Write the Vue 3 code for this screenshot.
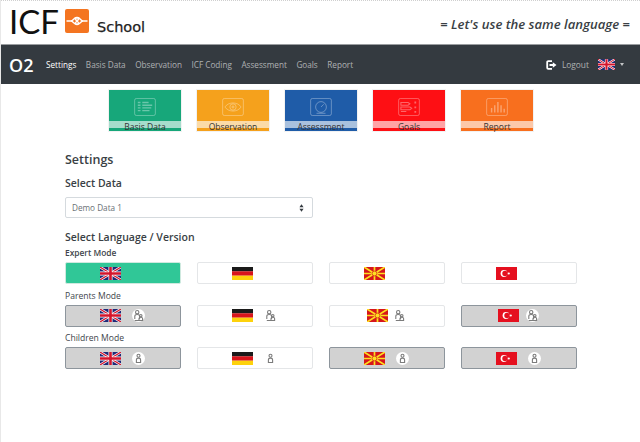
<script setup>
const navItems = [
  { label: 'Settings', active: true },
  { label: 'Basis Data' },
  { label: 'Observation' },
  { label: 'ICF Coding' },
  { label: 'Assessment' },
  { label: 'Goals' },
  { label: 'Report' }
]
const tiles = [
  { label: 'Basis Data', cls: 'green', icon: 'list' },
  { label: 'Observation', cls: 'amber', icon: 'eye' },
  { label: 'Assessment', cls: 'blue', icon: 'gauge' },
  { label: 'Goals', cls: 'red', icon: 'goals' },
  { label: 'Report', cls: 'orange', icon: 'bars' }
]
const modes = [
  {
    title: 'Expert Mode',
    icon: '',
    buttons: [
      { flag: 'uk', state: 'on', gap: 11 },
      { flag: 'de', state: 'off', gap: 11 },
      { flag: 'mk', state: 'off', gap: 11 },
      { flag: 'tr', state: 'off', gap: 11 }
    ]
  },
  {
    title: 'Parents Mode',
    icon: 'parents',
    buttons: [
      { flag: 'uk', state: 'grey', gap: 11 },
      { flag: 'de', state: 'off', gap: 11 },
      { flag: 'mk', state: 'off', gap: 5 },
      { flag: 'tr', state: 'grey', gap: 7 }
    ]
  },
  {
    title: 'Children Mode',
    icon: 'child',
    buttons: [
      { flag: 'uk', state: 'grey', gap: 11 },
      { flag: 'de', state: 'off', gap: 11 },
      { flag: 'mk', state: 'grey', gap: 11 },
      { flag: 'tr', state: 'grey', gap: 11 }
    ]
  }
]
</script>

<template>
  <div class="page">
    <header class="brand">
      <div class="brand-left">
        <span class="icf">ICF</span>
        <svg class="logo" viewBox="0 0 24 24" width="24" height="24">
          <rect width="24" height="24" rx="2" fill="#f47521" />
          <path d="M1.500 12H6c2 0 3-3.400 5.500-3.400S14 10.500 12 12s-2 3.400.5 3.400S16 12 18 12h4.500" fill="none" stroke="#fff" stroke-width="1.500" />
          <path d="M6 12c2 0 3 3.400 5.500 3.400S14 13.500 12 12s-2-3.400.5-3.400S16 12 18 12" fill="none" stroke="#fff" stroke-width="1.500" />
        </svg>
        <span class="school">School</span>
      </div>
      <div class="tagline"><span>=</span> <em>Let's use the same language</em> <span>=</span></div>
    </header>

    <nav class="navbar">
      <span class="project">O2</span>
      <ul class="nav-list">
        <li v-for="n in navItems" :key="n.label" :class="{ active: n.active }">{{ n.label }}</li>
      </ul>
      <div class="nav-right">
        <svg class="logout-icon" viewBox="0 0 11 10" width="11" height="10">
          <path d="M6 1.200H2.200a1 1 0 0 0-1 1v5.600a1 1 0 0 0 1 1H6" fill="none" stroke="#fff" stroke-width="1.800" />
          <path d="M3.500 4h3.300V2.200L10.500 5 6.800 7.800V6H3.500z" fill="#fff" />
        </svg>
        <span class="logout">Logout</span>
        <svg class="nav-flag" viewBox="0 0 21 13" width="17" height="11">
          <rect width="21" height="13" fill="#1f2a78" />
          <path d="M0 0l21 13M21 0L0 13" stroke="#fff" stroke-width="2.600" />
          <path d="M0 0l21 13M21 0L0 13" stroke="#d4142c" stroke-width="1.200" />
          <path d="M10.500 0v13M0 6.500h21" stroke="#fff" stroke-width="4" />
          <path d="M10.500 0v13M0 6.500h21" stroke="#d4142c" stroke-width="2.600" />
        </svg>
        <span class="caret"></span>
      </div>
    </nav>

    <section class="tiles">
      <div v-for="t in tiles" :key="t.label" class="tile" :class="t.cls">
        <div class="tile-body">
          <svg viewBox="0 0 24 20" width="22" height="18" fill="none" stroke="rgba(255,255,255,.36)" stroke-width="1">
            <rect x=".5" y=".5" width="23" height="19" rx="2" />
            <g v-if="t.icon === 'list'" stroke-width="1.500">
              <path d="M4 5h3M9 5h7M4 8h3M9 8h11M4 11h3M9 11h10M4 14h3M9 14h8" />
            </g>
            <g v-else-if="t.icon === 'eye'">
              <path d="M3 10c4-6 14-6 18 0-4 6-14 6-18 0z" />
              <circle cx="12" cy="10" r="3.500" />
              <circle cx="12" cy="10" r="1.200" />
            </g>
            <g v-else-if="t.icon === 'gauge'">
              <circle cx="12" cy="10" r="6" />
              <path d="M12 10l3-3M7 17h10" />
            </g>
            <g v-else-if="t.icon === 'goals'" stroke-width="1.200">
              <path d="M3 5h8l2 1.500L11 8H3zM3 10h10l2 1.500-2 1.500H3zM3 15h6" />
              <path d="M19 4v2M19 9.500v2M19 14.500v2" stroke-width="2" />
            </g>
            <g v-else stroke-width="1.600">
              <path d="M6 16v-5M9.500 16V8M13 16V4.500M16.500 16V8M20 16v-4" />
            </g>
          </svg>
        </div>
        <div class="tile-label">{{ t.label }}</div>
      </div>
    </section>

    <main class="content">
      <h2 class="title">Settings</h2>
      <h3 class="subtitle">Select Data</h3>
      <div class="select">
        <span>Demo Data 1</span>
        <svg viewBox="0 0 6 9" width="5" height="8"><path d="M3 0l2.500 3.500h-5zM3 9L.5 5.500h5z" fill="#343a40" /></svg>
      </div>
      <h3 class="subtitle lang">Select Language / Version</h3>

      <div class="modes">
        <div v-for="m in modes" :key="m.title" class="mode">
          <div class="mode-title">{{ m.title }}</div>
          <div class="grid">
            <div v-for="(b, i) in m.buttons" :key="i" class="lang-btn" :class="b.state" :style="{ gap: b.gap + 'px' }">
              <svg class="flag" viewBox="0 0 21 13" width="21" height="13">
                <template v-if="b.flag === 'uk'">
                  <rect width="21" height="13" fill="#1f2a78" />
                  <path d="M0 0l21 13M21 0L0 13" stroke="#fff" stroke-width="2.600" />
                  <path d="M0 0l21 13M21 0L0 13" stroke="#d4142c" stroke-width="1.200" />
                  <path d="M10.500 0v13M0 6.500h21" stroke="#fff" stroke-width="4" />
                  <path d="M10.500 0v13M0 6.500h21" stroke="#d4142c" stroke-width="2.600" />
                </template>
                <template v-else-if="b.flag === 'de'">
                  <rect width="21" height="4.400" fill="#1a1a1a" />
                  <rect y="4.300" width="21" height="4.400" fill="#d8141c" />
                  <rect y="8.700" width="21" height="4.300" fill="#fdd20c" />
                </template>
                <template v-else-if="b.flag === 'mk'">
                  <rect width="21" height="13" fill="#d6151c" />
                  <path d="M0 0l21 13M21 0L0 13M10.500 0v13M0 6.500h21" stroke="#fce020" stroke-width="1.700" />
                  <circle cx="10.500" cy="6.500" r="2.400" fill="#fce020" stroke="#d6151c" stroke-width=".7" />
                </template>
                <template v-else>
                  <rect width="21" height="13" fill="#e5101f" />
                  <circle cx="8" cy="6.500" r="3.400" fill="#fff" />
                  <circle cx="9" cy="6.500" r="2.700" fill="#e5101f" />
                  <circle cx="12.800" cy="6.500" r="1.100" fill="#fff" />
                </template>
              </svg>
              <span class="mode-icon" :class="{ disc: b.state === 'grey' }">
                <svg v-if="m.icon === 'parents'" viewBox="0 0 13 13" width="13" height="13" fill="none" stroke="#7c7c7c" stroke-width="1.100">
                  <circle cx="5.200" cy="3.200" r="1.700" />
                  <path d="M2.800 10V7.300c0-1 1-1.800 2.400-1.800S7.600 6.300 7.600 7.300V10" />
                  <circle cx="8.800" cy="6.700" r="1.200" />
                  <path d="M7 11.500V9.500c0-.8.800-1.300 1.800-1.300s1.800.5 1.800 1.300v2zM2.800 11.500h4" />
                </svg>
                <svg v-else-if="m.icon === 'child'" viewBox="0 0 13 13" width="13" height="13" fill="none" stroke="#7c7c7c" stroke-width="1.100">
                  <circle cx="6.500" cy="3.800" r="1.500" />
                  <path d="M4.400 10.500V8c0-1 .9-1.900 2.100-1.900S8.600 7 8.600 8v2.500z" />
                </svg>
              </span>
            </div>
          </div>
        </div>
      </div>
    </main>
  </div>
</template>

<style scoped>
.page {
  width: 640px;
  height: 442px;
  overflow: hidden;
  background: #fff;
  font-family: "Open Sans", "Noto Sans", sans-serif;
  color: #343a40;
  box-sizing: border-box;
  border-left: 1px solid #e8e8e8;
}
.brand {
  height: 44px;
  box-sizing: border-box;
  border-top: 1px dotted #cfcfcf;
  display: flex;
  justify-content: space-between;
  align-items: center;
  padding: 0 10px 0 8px;
}
.brand-left {
  display: flex;
  align-items: flex-start;
  height: 43px;
}
.icf {
  font-family: "Lato", sans-serif;
  font-size: 33px;
  line-height: 40px;
  width: 47px;
  color: #111;
}
.logo {
  margin: 8px 0 0 9px;
}
.school {
  font-family: "DejaVu Sans", sans-serif;
  font-size: 14.500px;
  line-height: 18px;
  margin: 17px 0 0 8px;
  color: #222;
  font-weight: 500;
  -webkit-text-stroke: .25px #222;
}
.tagline {
  font-family: "Open Sans", sans-serif;
  font-size: 13.100px;
  font-weight: 600;
  color: #3a3f45;
  margin-top: 3px;
}
.navbar {
  height: 40px;
  box-sizing: border-box;
  background: #343a40;
  border-top: 1px solid #9a9da0;
  display: flex;
  align-items: center;
  padding: 0 16px 0 8px;
}
.project {
  color: #fff;
  font-family: "Open Sans", sans-serif;
  font-size: 18px;
  font-weight: 600;
  width: 37px;
}
.nav-list {
  list-style: none;
  display: flex;
  gap: 9.500px;
  margin: 0;
  padding: 0;
  font-size: 8.200px;
  color: rgba(255, 255, 255, .6);
}
.nav-list .active {
  color: #fff;
}
.nav-right {
  margin-left: auto;
  display: flex;
  align-items: center;
}
.logout {
  font-size: 8.400px;
  color: rgba(255, 255, 255, .6);
  margin: 0 9px 0 5px;
}
.caret {
  width: 0;
  height: 0;
  margin-left: 5px;
  border-left: 2.500px solid transparent;
  border-right: 2.500px solid transparent;
  border-top: 3px solid rgba(255, 255, 255, .7);
}
.tiles {
  display: flex;
  gap: 16px;
  padding: 6px 0 0 108px;
}
.tile {
  width: 72px;
  height: 41px;
  display: flex;
  flex-direction: column;
  padding-bottom: 3px;
  box-sizing: border-box;
  outline: 1px solid rgba(0, 0, 0, .05);
}
.tile-body {
  height: 31px;
  display: flex;
  justify-content: center;
  align-items: center;
  padding-top: 2px;
  box-sizing: border-box;
}
.tile-label {
  height: 7px;
  background: rgba(255, 255, 255, .62);
  font-size: 8.500px;
  line-height: 11px;
  color: #333;
  text-align: center;
  white-space: nowrap;
}
.green { background: #17a77a; }
.amber { background: #f5a11c; }
.blue { background: #1f5ca8; }
.red { background: #fe0f14; }
.orange { background: #f86f1e; }
.content {
  padding: 20px 0 0 64px;
}
.title {
  margin: 0;
  font-size: 12.500px;
  line-height: 17px;
  font-weight: 600;
  color: #3a3f45;
}
.subtitle {
  margin: 8px 0 0;
  font-size: 10.500px;
  line-height: 15px;
  font-weight: 600;
  color: #3a3f45;
}
.select {
  width: 248px;
  height: 21px;
  box-sizing: border-box;
  margin-top: 6px;
  border: 1px solid #d5dade;
  border-radius: 2px;
  display: flex;
  align-items: center;
  justify-content: space-between;
  padding: 0 8px 0 6px;
  font-size: 8.200px;
  color: #6a7076;
}
.subtitle.lang {
  margin-top: 12px;
}
.modes {
  padding-top: 2px;
}
.mode {
  height: 42.500px;
}
.mode-title {
  font-size: 8.600px;
  line-height: 12px;
  font-weight: 400;
  color: #40454b;
}
.mode:first-child .mode-title {
  font-size: 8.400px;
  font-weight: 600;
}
.grid {
  display: grid;
  grid-template-columns: repeat(4, 116px);
  gap: 16px;
  margin-top: 3px;
}
.lang-btn {
  height: 22px;
  box-sizing: border-box;
  border-radius: 2px;
  display: flex;
  align-items: center;
  justify-content: center;
  border: 1px solid #e4e6e8;
  background: #fff;
}
.lang-btn.on {
  background: #30c797;
  border-color: #cfe9df;
}
.lang-btn.grey {
  background: #d2d2d2;
  border: 1px solid #8d959c;
}
.mode-icon {
  width: 13px;
  height: 13px;
  margin-right: 1px;
  display: block;
  border-radius: 50%;
}
.mode-icon.disc {
  background: #fff;
}
.mode-icon svg {
  display: block;
}
.flag {
  display: block;
}
</style>
